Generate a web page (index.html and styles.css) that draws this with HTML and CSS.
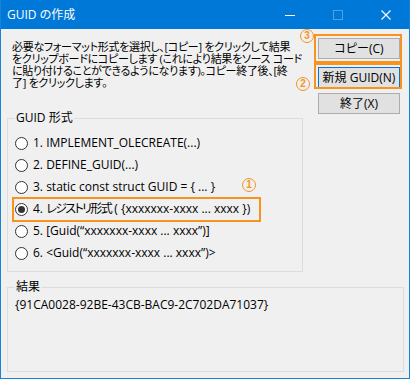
FILE: index.html
```html
<!DOCTYPE html>
<html lang="ja">
<head>
  <meta charset="UTF-8" />
  <title>GUID の作成</title>
  <link rel="stylesheet" href="styles.css">
</head>
<body>
  <div class="window">
    <div class="titlebar">
      <span class="title">GUID の作成</span>
      <div class="controls">
        <span class="ctl"><svg width="10" height="10" viewBox="0 0 10 10"><path d="M0 5.5h10" stroke="#fff" stroke-width="1"/></svg></span>
        <span class="ctl"><svg width="10" height="10" viewBox="0 0 10 10"><rect x="0.5" y="0.5" width="9" height="9" fill="none" stroke="#4fa1e3" stroke-width="1"/></svg></span>
        <span class="ctl"><svg width="10" height="10" viewBox="0 0 10 10"><path d="M0.5 0.5l9 9M9.5 0.5l-9 9" stroke="#fff" stroke-width="1.1"/></svg></span>
      </div>
    </div>

    <div class="client">
      <div class="top">
        <p class="desc">必要なフォーマット形式を選択し、[コピー] をクリックして結果<br>をクリップボードにコピーします (これにより結果をソース コード<br>に貼り付けることができるようになります)。コピー終了後、[終<br>了] をクリックします。</p>
        <div class="buttons">
          <button class="btn">コピー(C)</button>
          <button class="btn default">新規 GUID(N)</button>
          <button class="btn">終了(X)</button>
        </div>
      </div>

      <fieldset class="group formats">
        <legend>GUID 形式</legend>
        <div class="option"><span class="radio"></span>1. IMPLEMENT_OLECREATE(...)</div>
        <div class="option"><span class="radio"></span>2. DEFINE_GUID(...)</div>
        <div class="option"><span class="radio"></span>3. static const struct GUID = { ... }</div>
        <div class="option"><span class="radio checked"></span><span>4. <span class="ja">レジストリ形式</span> ( {xxxxxxx-xxxx ... xxxx })</span></div>
        <div class="option"><span class="radio"></span>5. [Guid(“xxxxxxx-xxxx ... xxxx”)]</div>
        <div class="option"><span class="radio"></span>6. &lt;Guid(“xxxxxxx-xxxx ... xxxx”)&gt;</div>
      </fieldset>

      <fieldset class="group result">
        <legend>結果</legend>
        <div class="result-text">{91CA0028-92BE-43CB-BAC9-2C702DA71037}</div>
      </fieldset>
    </div>

    <!-- annotations -->
    <div class="mark box-copy"></div>
    <div class="mark box-new"></div>
    <div class="mark box-reg"></div>
    <span class="num num3">3</span>
    <span class="num num2">2</span>
    <span class="num num1">1</span>
  </div>
</body>
</html>
```

FILE: styles.css
```css
body {
  margin: 0;
  font-family: "Open Sans", "Noto Sans CJK JP", sans-serif;
  font-size: 12px;
  font-feature-settings: "palt" 1;
  color: #000;
}
.window {
  position: relative;
  width: 410px;
  height: 379px;
  box-sizing: border-box;
  border: 1px solid #1883d7;
  border-top: none;
  background-color: #f0f0f0;
  overflow: hidden;
}
.titlebar {
  display: flex;
  align-items: center;
  height: 29px;
  margin: 0 -1px;
  background-color: #0078d7;
  color: #fff;
}
.title {
  padding-left: 7px;
  line-height: 14px;
  flex: 1;
}
.controls {
  display: flex;
  height: 29px;
}
.ctl {
  width: 48px;
  display: flex;
  align-items: center;
  justify-content: center;
}
.client {
  padding: 0 5px 0 6px;
}
.top {
  display: flex;
  margin-top: 9px;
}
.desc {
  flex: 1;
  margin: 0 0 0 5px;
  padding-top: 3px;
  font-size: 11px;
  line-height: 12px;
  white-space: nowrap;
  letter-spacing: -0.3px;
}
.buttons {
  display: flex;
  flex-direction: column;
  width: 82px;
  margin-right: 4px;
}
.btn {
  height: 21px;
  padding: 0;
  font: inherit;
  line-height: 14px;
  color: #000;
  background-color: #e1e1e1;
  border: 1px solid #adadad;
}
.btn.default {
  margin-top: 8px;
  border-color: #0078d7;
}
.btn:last-child {
  margin-top: 5px;
}
.group {
  margin: 0;
  border: 1px solid #dcdcdc;
  padding: 0 0 0 7px;
}
.group legend {
  padding: 0 1px;
  line-height: 12px;
}
.formats {
  width: 296px;
  box-sizing: border-box;
  margin-top: -2px;
  padding-top: 8px;
  padding-bottom: 7px;
}
.option {
  display: flex;
  align-items: center;
  gap: 5px;
  height: 22px;
  line-height: 14px;
  white-space: nowrap;
}
.ja {
  letter-spacing: -1.6px;
}
.radio {
  position: relative;
  width: 13px;
  height: 13px;
  box-sizing: border-box;
  border: 1px solid #333;
  border-radius: 50%;
  background-color: #fff;
  flex-shrink: 0;
}
.radio.checked::after {
  content: "";
  position: absolute;
  left: 2px;
  top: 2px;
  width: 7px;
  height: 7px;
  border-radius: 50%;
  background-color: #333;
}
.result {
  margin-top: 9px;
  padding-top: 5px;
}
.result-text {
  height: 73px;
  line-height: 14px;
}
.mark {
  position: absolute;
  box-sizing: border-box;
  border: 2px solid #f7931e;
}
.box-copy { left: 313px; top: 34px; width: 88px; height: 29px; }
.box-new { left: 313px; top: 63px; width: 88px; height: 26px; }
.box-reg { left: 11px; top: 197px; width: 249px; height: 25px; }
.num {
  position: absolute;
  width: 14px;
  height: 14px;
  box-sizing: border-box;
  border: 1.5px solid #f7931e;
  border-radius: 50%;
  background-color: #f0f0f0;
  color: #f7931e;
  font-family: "Liberation Sans", sans-serif;
  font-weight: bold;
  font-size: 10px;
  line-height: 11px;
  text-align: center;
}
.num3 { left: 299px; top: 29px; }
.num2 { left: 295px; top: 77px; }
.num1 { left: 241px; top: 178px; }
```
